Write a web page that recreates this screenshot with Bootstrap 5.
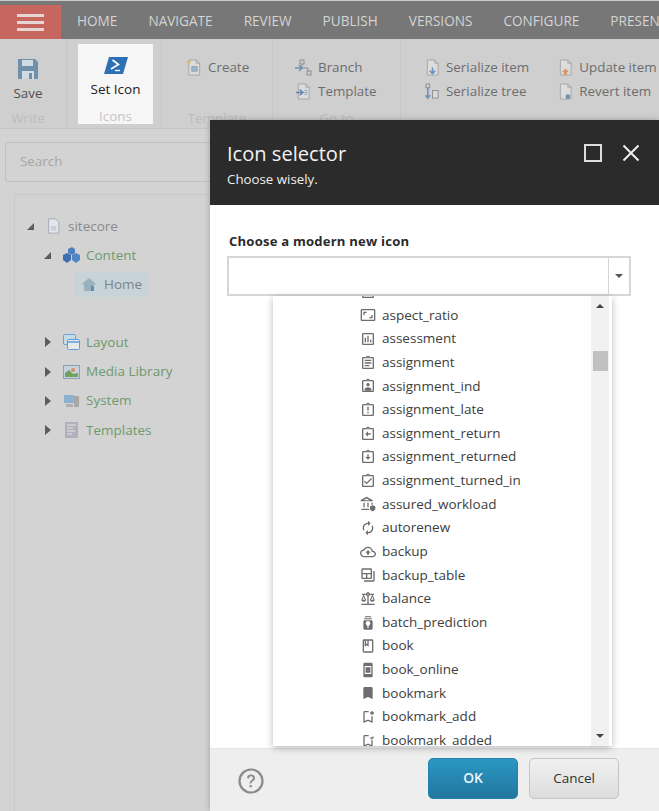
<!DOCTYPE html>
<html lang="en">
<head>
<meta charset="utf-8">
<title>Icon selector</title>
<link rel="stylesheet" href="https://cdn.jsdelivr.net/npm/bootstrap@5.3.0/dist/css/bootstrap.min.css">
<style>
html,body{height:811px;overflow:hidden}
body{background:#d3d3d3;font-family:"Open Sans","Noto Sans",sans-serif;font-size:13.4px;color:#555;position:relative;width:659px}
.topline{height:1px;background:#c9c9c9}
.tabbar{height:38px;background:#777;padding-top:4px;white-space:nowrap;overflow:hidden}
.burger{width:61px;height:34px;background:#c7655f;gap:4px}
.burger i{display:block;width:27px;height:3px;background:#e5d5d3}
.tabnav{padding-left:16px;padding-bottom:2px;gap:31px}
.tabnav a{color:#d4d4d4;font-size:13.6px;text-decoration:none}
.ribbon{height:90px;background:#cfcfcf;border-bottom:1px solid #c6c6c6;white-space:nowrap;overflow:hidden}
.rgroup{border-right:1px solid #c6c6c6;height:89px;flex:none;position:relative}
.rg1{width:67px;padding-right:10px}
.rg2{width:95px}
.rg3{width:111px;padding-left:24px}
.rg4{width:128px;padding-left:22px}
.rg5{width:258px;border-right:0;padding-left:24px;gap:29px}
.bigbtn{flex-direction:column;align-items:center;padding-top:19px;color:#4f4f4f}
.savelbl{margin-top:3px}
.seticon{position:absolute;left:11px;top:5px;width:75px;height:80px;background:#f6f6f6;padding-top:12px;text-align:center;color:#222;font-size:13.5px}
.seticon svg{display:block;margin:0 auto 4px}
.gcap{position:absolute;left:0;right:0;top:69px;text-align:center;font-size:13.4px;color:#bdbdbd}
.rg1 .gcap{right:10px}
.seticon .gcap{top:62px;color:#c9c5c5}
.rrow{height:24px;color:#6d6d6d;font-size:13.4px;gap:6px}
.rcol{padding-top:16px}
.searchbox{margin:13px 0 0 5px;width:300px;height:40px;background:#d3d3d3;border:1px solid #bfbfbf;border-radius:3px;padding:0 14px;line-height:36px;color:#a6a6a6;font-size:13.4px}
.treewrap{margin:12px 0 0 14px;height:617px;border-left:1px solid #c8c8c8;border-top:1px solid #c8c8c8;padding-top:16.5px}
.trow{height:29.1px;gap:6px;font-size:13.5px;color:#6d9a6d}
.ind0{padding-left:11px;gap:7px}
.ind0 .tw{margin-right:3px}
.ind1{padding-left:28px}
.ind1 .tw{margin-right:4px}
.tw{width:10px;flex:none}
.tnm{color:#8a8a8a}
.homesel{background:#c6d3d8;height:25px;margin-left:60px;width:73px;color:#7e8486;padding-left:6px;gap:7px}
.tree-gap{height:29.1px}
.dlg{position:absolute;left:210px;top:120px;width:449px;height:691px;background:#fff;box-shadow:0 0 6px rgba(0,0,0,.25)}
.dlghead{height:85px;background:#2b2b2b;color:#fff;padding:19px 19px 0 17px}
.dlgtitle{font-size:20.1px;line-height:29px;color:#f2f2f2}
.dlgsub{font-size:13.3px;line-height:20px;color:#eee;margin-top:1px}
.wctl{gap:20px;padding-top:5px}
.dlgbody{height:543px;padding:28px 28px 0 17px}
.flabel{font-size:13.1px;font-weight:700;color:#2b2b2b;line-height:16px;margin:0 0 7px 2px;letter-spacing:.2px}
.combo{height:40px;border:2px solid #d6d6d6}
.combo b{display:block;flex:1;border-right:1px solid #d6d6d6}
.combobtn{width:20px;flex:none}
.cv{width:0;height:0;border-left:4px solid transparent;border-right:4px solid transparent;border-top:4px solid #555}
.ddpanel{position:absolute;left:63px;top:176px;width:339px;height:450px;background:#fff;overflow:hidden;box-shadow:0 2px 7px rgba(0,0,0,.28)}
.ddlist{margin:-16px 0 0 0;padding:0 0 0 87px;list-style:none;width:318px}
.ddlist li{height:23.64px;gap:6px;color:#3d3d3d;font-size:13.5px;white-space:nowrap;line-height:23.64px}
.ddlist svg{width:16px;height:16px;flex:none;fill:#6e6e6e}
.sbar{position:absolute;right:3px;top:0;bottom:0;width:18px;background:#f1f1f1}
.sthumb{position:absolute;left:2px;top:55px;width:15px;height:20px;background:#c1c1c1}
.aup,.adn{position:absolute;left:5px;width:0;height:0;border-left:4px solid transparent;border-right:4px solid transparent}
.aup{top:8px;border-bottom:4px solid #444}
.adn{bottom:8px;border-top:4px solid #444}
.dlgfoot{height:63px;background:#eee;border-top:1px solid #e5e5e5;padding:9px 40px 0 28px}
.helpic{margin-top:10px}
.btnok{width:90px;height:41px;background:linear-gradient(#2a97c3,#22779f);border:1px solid #2283ad;border-radius:5px;color:#f0f6f9;font-size:13.8px;font-weight:600;padding:0}
.btncx{width:90px;height:41px;background:linear-gradient(#f1f1f1,#dcdcdc);border:1px solid #c4c4c4;border-radius:5px;color:#333;font-size:13.5px;padding:0;margin-left:11px}
.btnok:hover{background:#22779f;color:#fff}
</style>
</head>
<body>
<svg width="0" height="0" class="position-absolute">
<defs>
<symbol id="clip" viewBox="0 0 24 24"><path d="M19 3h-4.180C14.400 1.840 13.300 1 12 1c-1.300 0-2.400.84-2.820 2H5c-1.100 0-2 .9-2 2v14c0 1.100.9 2 2 2h14c1.100 0 2-.9 2-2V5c0-1.100-.9-2-2-2zm-7-.25c.41 0 .75.34.75.75s-.34.75-.75.75-.75-.34-.75-.75.34-.75.75-.75zM19 19H5V5h14v14z"/></symbol>
<symbol id="doc" viewBox="0 0 16 18"><path d="M2.500 1h8l3.500 3.500V17h-11.500z" fill="#dcdcdc" stroke="#a5a5a5"/><path d="M10.500 1v3.500H14" fill="none" stroke="#a5a5a5"/></symbol>
</defs>
</svg>

<div class="topline"></div>
<div class="tabbar d-flex">
  <div class="burger d-flex flex-column align-items-center justify-content-center flex-shrink-0"><i></i><i></i><i></i></div>
  <nav class="tabnav d-flex align-items-center">
    <a href="#">HOME</a><a href="#">NAVIGATE</a><a href="#">REVIEW</a><a href="#">PUBLISH</a><a href="#">VERSIONS</a><a href="#">CONFIGURE</a><a href="#">PRESENTATION</a>
  </nav>
</div>

<div class="ribbon d-flex">
  <div class="rgroup rg1 d-flex bigbtn">
    <svg width="22" height="22" viewBox="0 0 22 22"><path d="M1 1h17l3 3v17H1z" fill="#6f8faa"/><rect x="5" y="2" width="11" height="6" fill="#d3dbe2"/><rect x="5" y="13" width="12" height="8" fill="#d3dbe2"/><rect x="12" y="15" width="3" height="6" fill="#6f8faa"/></svg>
    <span class="savelbl">Save</span>
    <span class="gcap">Write</span>
  </div>
  <div class="rgroup rg2">
    <div class="seticon">
      <svg width="24" height="19" viewBox="0 0 24 19"><path d="M5 1h19l-5 17H0z" fill="#2f70b4"/><path d="M8.500 4l6 4.500-7.500 4.500" fill="none" stroke="#fff" stroke-width="1.600"/><path d="M11 14.500h5" stroke="#fff" stroke-width="1.400"/></svg>
      <span>Set Icon</span>
      <span class="gcap">Icons</span>
    </div>
  </div>
  <div class="rgroup rg3 rcol">
    <div class="rrow d-flex align-items-center">
      <svg width="16" height="17" viewBox="0 0 16 18"><use href="#doc"/><path d="M5.500 8h6v5h-6z" fill="#9fb3c9" stroke="#8a9aaa" stroke-width=".7"/><path d="M0 3h5M2.500 .5v5" stroke="#cdb96a" stroke-width="1"/></svg>
      <span>Create</span>
    </div>
    <span class="gcap">Template</span>
  </div>
  <div class="rgroup rg4 rcol">
    <div class="rrow d-flex align-items-center">
      <svg width="17" height="17" viewBox="0 0 17 17"><rect x="5" y="1" width="4" height="4" fill="none" stroke="#8e8e8e"/><rect x="12" y="12" width="4" height="4" fill="none" stroke="#8e8e8e"/><path d="M7 5v4h6v3" fill="none" stroke="#8e8e8e"/><path d="M0 9h6M4 6l3 3-3 3" fill="none" stroke="#6f93b8" stroke-width="1.600"/></svg>
      <span>Branch</span>
    </div>
    <div class="rrow d-flex align-items-center">
      <svg width="17" height="17" viewBox="0 0 16 18"><use href="#doc"/><path d="M0 10h7M4 7l3.500 3-3.500 3" fill="none" stroke="#5f87b0" stroke-width="1.500"/><path d="M9 8h3M9 10h3M9 12h3" stroke="#8aa0b5"/></svg>
      <span>Template</span>
    </div>
    <span class="gcap">Go to</span>
  </div>
  <div class="rgroup rg5 rcol d-flex">
    <div>
      <div class="rrow d-flex align-items-center">
        <svg width="15" height="17" viewBox="0 0 16 18"><use href="#doc"/><path d="M8 9v6M5 12.500l3 3 3-3" fill="none" stroke="#6b93bb" stroke-width="1.700"/></svg>
        <span>Serialize item</span>
      </div>
      <div class="rrow d-flex align-items-center">
        <svg width="15" height="17" viewBox="0 0 16 18"><rect x="1" y="1" width="4" height="4" fill="none" stroke="#8e8e8e"/><path d="M3 5v10M.5 13l2.500 3 2.500-3" fill="none" stroke="#6b93bb" stroke-width="1.700"/><rect x="8" y="8" width="6" height="8" fill="#dadada" stroke="#8e8e8e"/></svg>
        <span>Serialize tree</span>
      </div>
    </div>
    <div>
      <div class="rrow d-flex align-items-center">
        <svg width="15" height="17" viewBox="0 0 16 18"><use href="#doc"/><path d="M8 10l4 4h-2.500v3h-3v-3H4z" fill="#d8976a"/></svg>
        <span>Update item</span>
      </div>
      <div class="rrow d-flex align-items-center">
        <svg width="15" height="17" viewBox="0 0 16 18"><use href="#doc"/><circle cx="10.500" cy="14.500" r="2.500" fill="#6f8faa"/></svg>
        <span>Revert item</span>
      </div>
    </div>
  </div>
</div>

<div class="searchbox">Search</div>

<div class="treewrap">
  <div class="trow d-flex align-items-center ind0">
    <svg class="tw" width="10" height="10" viewBox="0 0 10 10"><path d="M8 2v7H1z" fill="#5c5c5c"/></svg>
    <svg width="15" height="16" viewBox="0 0 16 18"><path d="M2.500 1h8l3.500 3.500V17h-11.500z" fill="#e3e5ea" stroke="#a3a8b5"/><path d="M5 9h6v5H5z" fill="#c9cede"/></svg>
    <span class="tnm">sitecore</span>
  </div>
  <div class="trow d-flex align-items-center ind1">
    <svg class="tw" width="10" height="10" viewBox="0 0 10 10"><path d="M8 2v7H1z" fill="#5c5c5c"/></svg>
    <svg width="17" height="16" viewBox="0 0 17 16"><path d="M5 2l4-2 3 2v4l-3 2-4-2z" fill="#4d7fbe"/><path d="M0 8l4-2 4 2v5l-4 3-4-3z" fill="#3f6fae"/><path d="M9 8l4-2 4 2v5l-4 3-4-3z" fill="#4f86c6"/></svg>
    <span>Content</span>
  </div>
  <div class="trow d-flex align-items-center">
    <div class="homesel d-flex align-items-center">
      <svg width="16" height="15" viewBox="0 0 16 15"><path d="M8 1L1 7l1 1 1-1v7h10V7l1 1 1-1z" fill="#9ab0bc"/><rect x="10" y="9" width="3" height="5" fill="#5d8fb9"/></svg>
      <span>Home</span>
    </div>
  </div>
  <div class="tree-gap"></div>
  <div class="trow d-flex align-items-center ind1">
    <svg class="tw" width="10" height="10" viewBox="0 0 10 10"><path d="M2 0l6 5-6 5z" fill="#5c5c5c"/></svg>
    <svg width="17" height="16" viewBox="0 0 17 16"><rect x=".5" y=".5" width="12" height="10" rx="1" fill="#c7daea" stroke="#6aa2d8"/><rect x="4.500" y="5.500" width="12" height="10" rx="1" fill="#e6e9ea" stroke="#5c9fe0"/><path d="M4.500 8h12" stroke="#5c9fe0" stroke-width="1.500"/></svg>
    <span>Layout</span>
  </div>
  <div class="trow d-flex align-items-center ind1">
    <svg class="tw" width="10" height="10" viewBox="0 0 10 10"><path d="M2 0l6 5-6 5z" fill="#5c5c5c"/></svg>
    <svg width="17" height="14" viewBox="0 0 17 14"><rect x=".5" y=".5" width="16" height="13" fill="#c7d2de" stroke="#8f9db5"/><path d="M2 12V8l4-3 4 4 5-1v4z" fill="#6fa35a"/><circle cx="10" cy="5" r="2" fill="#d68f5a"/></svg>
    <span>Media Library</span>
  </div>
  <div class="trow d-flex align-items-center ind1">
    <svg class="tw" width="10" height="10" viewBox="0 0 10 10"><path d="M2 0l6 5-6 5z" fill="#5c5c5c"/></svg>
    <svg width="17" height="14" viewBox="0 0 17 14"><rect x="1" y="1" width="10" height="8" fill="#8fb0d0"/><rect x="11" y="2" width="5" height="11" fill="#a8a8a8"/><rect x="3" y="10" width="7" height="3" fill="#b0b0b0"/></svg>
    <span>System</span>
  </div>
  <div class="trow d-flex align-items-center ind1">
    <svg class="tw" width="10" height="10" viewBox="0 0 10 10"><path d="M2 0l6 5-6 5z" fill="#5c5c5c"/></svg>
    <svg width="17" height="16" viewBox="0 0 17 16"><rect x="2" y="0" width="13" height="16" fill="#b0b0bc"/><path d="M4 3h9M4 6h6M4 9h8M4 12h5" stroke="#e6e6e6"/></svg>
    <span>Templates</span>
  </div>
</div>

<div class="dlg d-flex flex-column">
  <div class="dlghead d-flex justify-content-between align-items-start">
    <div>
      <div class="dlgtitle">Icon selector</div>
      <div class="dlgsub">Choose wisely.</div>
    </div>
    <div class="wctl d-flex align-items-center">
      <svg width="18" height="18" viewBox="0 0 18 18"><rect x="1" y="1" width="16" height="16" fill="none" stroke="#ddd" stroke-width="2"/></svg>
      <svg width="18" height="18" viewBox="0 0 18 18"><path d="M1.500 1.500l15 15M16.500 1.500l-15 15" stroke="#eee" stroke-width="2"/></svg>
    </div>
  </div>
  <div class="dlgbody">
    <div class="flabel">Choose a modern new icon</div>
    <div class="combo d-flex">
      <b></b>
      <div class="combobtn d-flex align-items-center justify-content-center"><span class="cv"></span></div>
    </div>
  </div>
  <div class="ddpanel">
    <ul class="ddlist">
      <li class="d-flex align-items-center"><svg viewBox="0 0 24 24"><path d="M19 3H5c-1.100 0-2 .9-2 2v14c0 1.100.9 2 2 2h14c1.100 0 2-.9 2-2V5c0-1.100-.9-2-2-2zm0 16H5V5h14z"/></svg></li>
      <li class="d-flex align-items-center"><svg viewBox="0 0 24 24"><path d="M19 12h-2v3h-3v2h5v-5zM7 9h3V7H5v5h2V9zm14-6H3c-1.100 0-2 .9-2 2v14c0 1.100.9 2 2 2h18c1.100 0 2-.9 2-2V5c0-1.100-.9-2-2-2zm0 16.010H3V4.990h18v14.020z"/></svg>aspect_ratio</li>
      <li class="d-flex align-items-center"><svg viewBox="0 0 24 24"><path d="M19 3H5c-1.100 0-2 .9-2 2v14c0 1.100.9 2 2 2h14c1.100 0 2-.9 2-2V5c0-1.100-.9-2-2-2zm0 16H5V5h14v14zM7 10h2v7H7zm4-3h2v10h-2zm4 6h2v4h-2z"/></svg>assessment</li>
      <li class="d-flex align-items-center"><svg viewBox="0 0 24 24"><use href="#clip"/><path d="M7 15h7v2H7zm0-4h10v2H7zm0-4h10v2H7z"/></svg>assignment</li>
      <li class="d-flex align-items-center"><svg viewBox="0 0 24 24"><use href="#clip"/><circle cx="12" cy="10" r="2.500"/><path d="M7 19v-2c0-2 3-3 5-3s5 1 5 3v2z"/></svg>assignment_ind</li>
      <li class="d-flex align-items-center"><svg viewBox="0 0 24 24"><use href="#clip"/><path d="M11 7h2v6h-2zm0 8h2v2h-2z"/></svg>assignment_late</li>
      <li class="d-flex align-items-center"><svg viewBox="0 0 24 24"><use href="#clip"/><path d="M12 8v3h4v2h-4v3l-4-4z"/></svg>assignment_return</li>
      <li class="d-flex align-items-center"><svg viewBox="0 0 24 24"><use href="#clip"/><path d="M11 8h2v4h3l-4 4-4-4h3z"/></svg>assignment_returned</li>
      <li class="d-flex align-items-center"><svg viewBox="0 0 24 24"><use href="#clip"/><path d="M18 9l-1.400-1.400-6.600 6.600-2.600-2.600L6 13l4 4z"/></svg>assignment_turned_in</li>
      <li class="d-flex align-items-center"><svg viewBox="0 0 24 24"><path d="M5 10h2v7H5zm6 0h2v7h-2zM2 19h12v2H2zM17 10h2v3h-2zM10 1L1 6v2h18V6zM5.500 6.500L10 3.800l4.500 2.700z"/><path d="M19 14l-4 1.500v3c0 2.500 2 4 4 4.500 2-.5 4-2 4-4.500v-3z"/></svg>assured_workload</li>
      <li class="d-flex align-items-center"><svg viewBox="0 0 24 24"><path d="M12 6v3l4-4-4-4v3c-4.420 0-8 3.580-8 8 0 1.570.46 3.030 1.240 4.260L6.700 14.800c-.45-.83-.7-1.790-.7-2.800 0-3.310 2.690-6 6-6zm6.760 1.740L17.300 9.200c.44.840.7 1.790.7 2.800 0 3.310-2.690 6-6 6v-3l-4 4 4 4v-3c4.420 0 8-3.580 8-8 0-1.570-.46-3.030-1.240-4.260z"/></svg>autorenew</li>
      <li class="d-flex align-items-center"><svg viewBox="0 0 24 24"><path d="M19.350 10.040C18.670 6.590 15.640 4 12 4 9.110 4 6.600 5.640 5.350 8.040 2.340 8.360 0 10.910 0 14c0 3.310 2.690 6 6 6h13c2.760 0 5-2.240 5-5 0-2.640-2.050-4.780-4.650-4.960zM19 18H6c-2.210 0-4-1.790-4-4 0-2.050 1.530-3.760 3.560-3.970l1.070-.11.500-.95C8.080 7.140 9.940 6 12 6c2.620 0 4.880 1.860 5.390 4.430l.3 1.500 1.530.11c1.560.1 2.780 1.410 2.780 2.960 0 1.650-1.350 3-3 3zM8 13h2.550v3h2.900v-3H16l-4-4z"/></svg>backup</li>
      <li class="d-flex align-items-center"><svg viewBox="0 0 24 24"><path d="M20 6v14H6v2h14c1.100 0 2-.9 2-2V6h-2z"/><path d="M16 2H4c-1.100 0-2 .9-2 2v12c0 1.100.9 2 2 2h12c1.100 0 2-.9 2-2V4c0-1.100-.9-2-2-2zM9 16H4v-5h5v5zm7 0h-5v-5h5v5zm0-7H4V4h12v5z"/></svg>backup_table</li>
      <li class="d-flex align-items-center"><svg viewBox="0 0 24 24"><path d="M13 7.830c.85-.3 1.530-.98 1.830-1.830H18l-3 7c0 1.660 1.570 3 3.500 3s3.500-1.340 3.500-3l-3-7h2V4h-6.170c-.41-1.170-1.520-2-2.830-2s-2.420.83-2.830 2H3v2h2l-3 7c0 1.660 1.570 3 3.500 3S9 14.660 9 13L6 6h3.170c.3.850.98 1.530 1.830 1.830V19H2v2h20v-2h-9V7.830zM20.370 13h-3.740l1.870-4.360L20.370 13zm-13 0H3.630L5.500 8.640 7.370 13zM12 6c-.55 0-1-.45-1-1s.45-1 1-1 1 .45 1 1-.45 1-1 1z"/></svg>balance</li>
      <li class="d-flex align-items-center"><svg viewBox="0 0 24 24"><path d="M17 8H7c-1.100 0-2 .9-2 2v10c0 1.100.9 2 2 2h10c1.100 0 2-.9 2-2V10c0-1.100-.9-2-2-2zm-4 12h-2v-1.500h2V20zm0-2.500h-2c0-1.500-2.500-3-2.500-5 0-1.930 1.570-3.500 3.500-3.500s3.500 1.570 3.500 3.500c0 2-2.500 3.500-2.500 5zM18 6.500H6c0-.83.67-1.500 1.500-1.500h9c.83 0 1.500.67 1.500 1.500zm-1-3H7C7 2.670 7.670 2 8.500 2h7c.83 0 1.500.67 1.500 1.500z"/></svg>batch_prediction</li>
      <li class="d-flex align-items-center"><svg viewBox="0 0 24 24"><path d="M18 2H6c-1.100 0-2 .9-2 2v16c0 1.100.9 2 2 2h12c1.100 0 2-.9 2-2V4c0-1.100-.9-2-2-2zM9 4h2v5l-1-.75L9 9V4zm9 16H6V4h1v9l3-2.250L13 13V4h5v16z"/></svg>book</li>
      <li class="d-flex align-items-center"><svg viewBox="0 0 24 24"><path d="M17 1.010L7 1c-1.100 0-2 .9-2 2v18c0 1.100.9 2 2 2h10c1.100 0 2-.9 2-2V3c0-1.100-.9-1.990-2-1.990zM17 18H7V6h10v12zm-1-7V9.140C16 8.510 15.490 8 14.860 8H9.150C8.520 8 8.010 8.510 8.010 9.140v1.870c.55 0 .99.450.99 1s-.44 1-1 1v1.860c0 .63.510 1.140 1.140 1.140h5.710c.63 0 1.140-.51 1.140-1.140V13c-.55 0-1-.45-1-1s.45-1 1-1z"/></svg>book_online</li>
      <li class="d-flex align-items-center"><svg viewBox="0 0 24 24"><path d="M17 3H7c-1.100 0-2 .9-2 2v16l7-3 7 3V5c0-1.100-.9-2-2-2z"/></svg>bookmark</li>
      <li class="d-flex align-items-center"><svg viewBox="0 0 24 24"><path d="M17 11v6.970l-5-2.140-5 2.140V5h6V3H7c-1.100 0-2 .9-2 2v16l7-3 7 3V11h-2zm4-4h-2v2h-2V7h-2V5h2V3h2v2h2v2z"/></svg>bookmark_add</li>
      <li class="d-flex align-items-center"><svg viewBox="0 0 24 24"><path d="M17 18l-5-2.180L7 18V5h6V3H7c-1.100 0-2 .9-2 2v16l7-3 7 3V11h-2v7zm4-11.680L17.460 10 15 7.500l1.400-1.400 1.050 1.050 2.130-2.130z"/></svg>bookmark_added</li>
    </ul>
    <div class="sbar"><span class="aup"></span><span class="sthumb"></span><span class="adn"></span></div>
  </div>
  <div class="dlgfoot d-flex align-items-start justify-content-between">
    <svg class="helpic" width="26" height="26" viewBox="0 0 26 26"><circle cx="13" cy="13" r="11.500" fill="none" stroke="#8a8a8a" stroke-width="2.200"/><path d="M9 10c0-2.500 2-3.500 4-3.500s4 1.100 4 3.400c0 3-3.600 3-3.600 5.600h-1.800c0-3.300 3.300-3.500 3.300-5.600 0-1-.8-1.700-1.900-1.700S11 9.400 11 10.500z" fill="#8a8a8a"/><rect x="11.600" y="17" width="2.200" height="2.300" fill="#8a8a8a"/></svg>
    <div class="d-flex">
      <button type="button" class="btn btnok">OK</button>
      <button type="button" class="btn btncx">Cancel</button>
    </div>
  </div>
</div>
<script src="https://cdn.jsdelivr.net/npm/bootstrap@5.3.0/dist/js/bootstrap.bundle.min.js"></script>
</body>
</html>
